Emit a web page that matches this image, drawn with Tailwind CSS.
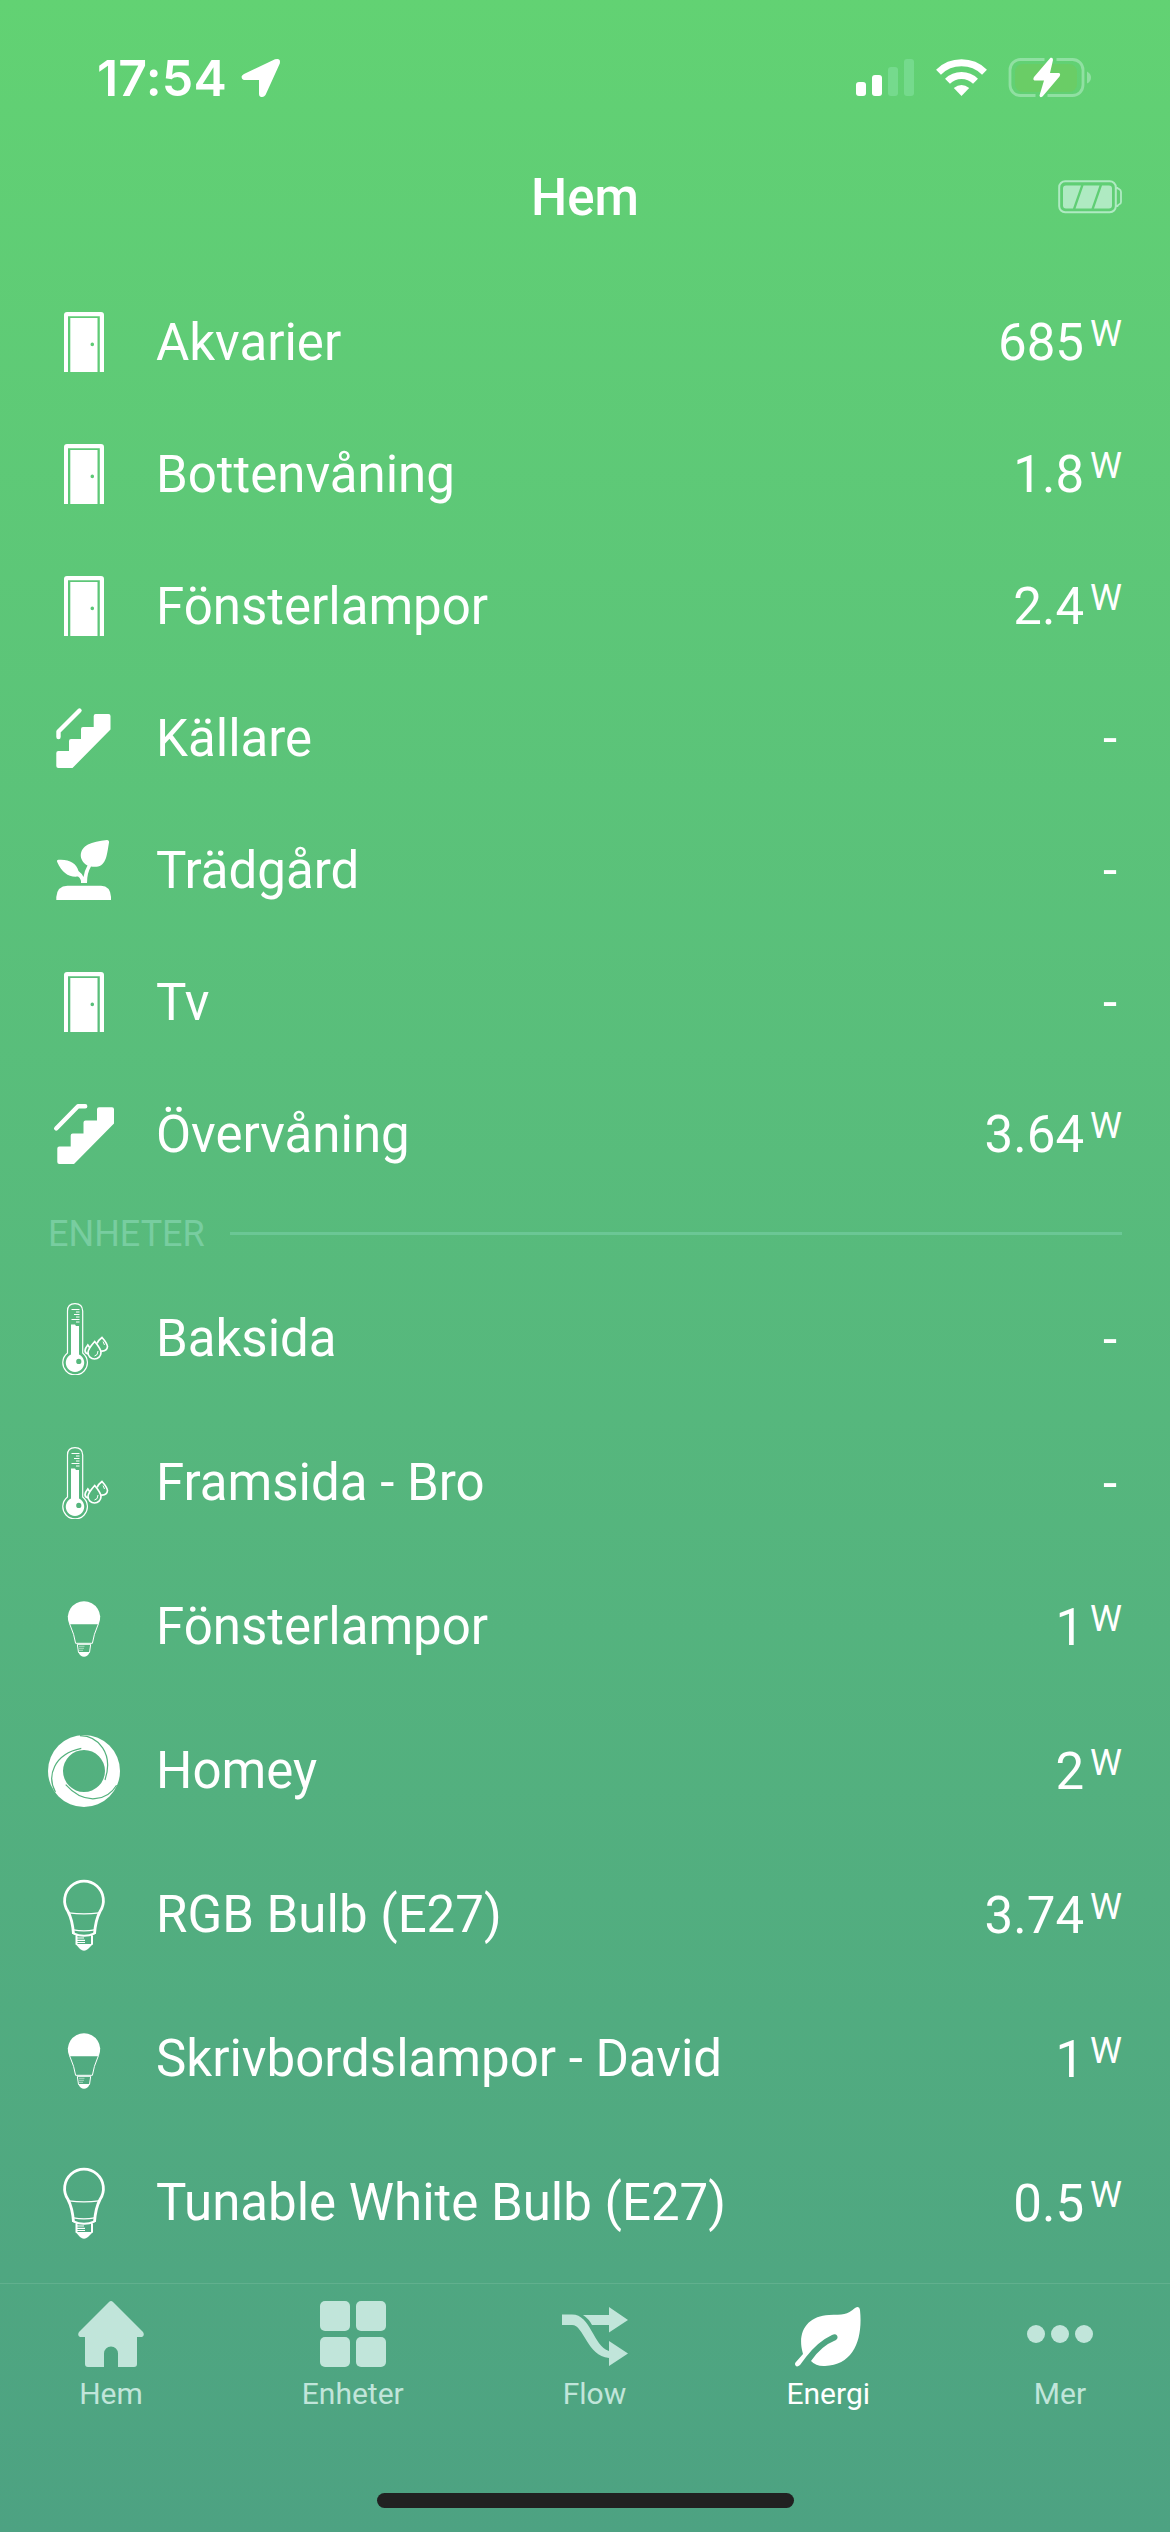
<!DOCTYPE html>
<html lang="sv">
<head>
<meta charset="utf-8">
<title>Hem – Energi</title>
<script src="https://cdn.jsdelivr.net/npm/@tailwindcss/browser@4"></script>
</head>
<body>
<svg class="hidden">
  <symbol id="door" viewBox="0 0 72 72">
    <path d="M16 66V9q0-3 3-3H53q3 0 3 3V66H51.8V10.2H20V66Z"/>
    <path fill-rule="evenodd" d="M22.3 12H49.5V66H22.3ZM44.3 36.6a1.8 1.8 0 1 0 0 3.6a1.8 1.8 0 0 0 0-3.6Z"/>
  </symbol>
  <symbol id="down" viewBox="0 0 72 72">
    <path fill="none" stroke="currentColor" stroke-width="4.4" stroke-linecap="round" stroke-linejoin="round" d="M10.5 35V29.5L31.5 8.5"/>
    <path d="M8.3 51q0-2 2-2H21V39q0-2 2-2H33V27q0-2 2-2H45.700V14q0-2 2-2H60.500q2 0 2 2V27.500L24.500 66H10.300q-2 0-2-2Z"/>
  </symbol>
  <symbol id="up" viewBox="0 0 72 72">
    <path fill="none" stroke="currentColor" stroke-width="4.400" stroke-linecap="round" stroke-linejoin="round" d="M8.200 30.500L30 8.200H37.200"/>
    <path d="M9.300 50.500q0-2 2-2H22.700V37.500q0-2 2-2H35.500V24.500q0-2 2-2H49V11.300q0-2 2-2H64q2 0 2 2V25.500L26 66H11.300q-2 0-2-2Z"/>
  </symbol>
  <symbol id="plant" viewBox="0 0 72 72">
    <path d="M8.300 66V63Q9 52 19.500 51.700H53Q62.500 52 63 63V66Z"/>
    <path d="M33 49Q33.500 45 30 42.500C21 43.500 14 39 9.200 28Q8.300 26 10.500 25.800C21 25 28.500 29 30.500 37Q34 39.500 35.500 43Q36.500 36.500 39.500 31.500C30 26 31 15 40 10.500Q47 7 59 6Q61.300 6 61 8.500C59 20 58.500 32 48.500 32.700Q45.500 33 43 32.500Q39 39 39 49Z"/>
  </symbol>
  <symbol id="thermo" viewBox="0 0 72 72">
    <g fill="none" stroke="currentColor" stroke-width="1.200">
      <path d="M19.500 50V8Q19.500.6 27 .6T34.700 8V50A12.300 12.300 0 1 1 19.500 50Z"/>
      <path stroke-width="1" d="M23.500 6.500H31.500M28 9H31.500M26 11.500H31.500M28 14H31.500M23.500 16.500H31.500M28 19H31.500"/>
    </g>
    <path fill-rule="evenodd" d="M23 21.500H27L28 23H31V51.500A9.200 9.200 0 1 1 23 51.500ZM30.800 55.800a2.600 2.600 0 1 0 0 5.200a2.600 2.600 0 0 0 0-5.200Z"/>
    <g fill="none" stroke="currentColor" stroke-width="1.700">
      <path d="M46.700 38.500Q53 46 53 49.500A6.500 6.500 0 0 1 40 49.500Q40 46 46.700 38.500Z"/>
      <path d="M40.500 51Q37 50.500 37 47.500Q37 45.500 39.800 42L42 45M49 40.500Q50 37.500 54 34.500Q59 40 59.500 43.500Q59 48.500 53 48"/>
      <path stroke-width="1" d="M46.500 53Q50 52.500 50 48M55 38.500L56.500 42"/>
    </g>
  </symbol>
  <symbol id="led" viewBox="0 0 72 72">
    <path d="M21.300 33.200A16.200 16.200 0 1 1 50.700 33.200Z"/>
    <g fill="none" stroke="currentColor" stroke-width="1">
      <path d="M21.700 33Q26.500 44 27.600 52.300H44.400Q45.500 44 50.300 33"/>
      <path d="M29.300 53.300L30.500 61.500H41.500L42.700 53.300Z"/>
      <path opacity=".5" d="M31 55.300H36.500M31 57.300H36M31 59.300H35"/>
    </g>
    <path d="M30.500 61.500H41.500Q39.500 65.800 36 65.800T30.500 61.500Z"/>
  </symbol>
  <symbol id="bulb" viewBox="0 0 72 72">
    <g fill="none" stroke="currentColor" stroke-width="2.800">
      <path d="M25.500 55Q24.500 41 20 32.500A19.400 19.400 0 1 1 52 32.500Q47.500 41 46.500 55"/>
      <path stroke-width="1.300" d="M21 33.800Q36 36 51 33.800M25.500 50.800Q36 53 46.500 50.800"/>
      <path stroke-width="2" d="M25.500 54.500Q36 59 46.500 54.500M28.500 56.500V65.500M44 56.500V65.500"/>
      <path stroke-width="1.200" d="M29 59H36M29 61.300H37M29 63.500H37"/>
    </g>
    <path d="M27.500 65H45L40 70Q36 73.500 32 70Z"/>
  </symbol>
  <symbol id="homey" viewBox="0 0 72 72">
    <path fill-rule="evenodd" d="M36 0a36 36 0 1 0 0 72a36 36 0 0 0 0-72ZM36 15a21 21 0 1 1 0 42a21 21 0 0 1 0-42Z"/>
    <g fill="none" class="stroke-[#54b17d]" stroke-width="1.200">
      <path id="swirl" d="M32 .7C50 1 66 18 57 45"/>
      <use href="#swirl" transform="rotate(120 36 36)"/>
      <use href="#swirl" transform="rotate(240 36 36)"/>
    </g>
  </symbol>
</svg>

<div class="w-[1170px] h-[2532px] flex flex-col overflow-hidden bg-linear-to-b from-[#62d273] to-[#4da282] text-white font-['Roboto',sans-serif]">
  <header class="h-[276px] shrink-0 flex flex-col">
    <div class="h-[150px] pl-[97px] pr-[78px] pt-[6px] flex items-center justify-between">
      <div class="flex items-center gap-3.5">
        <span class="font-['Inter',sans-serif] font-semibold text-[50px] leading-none tracking-[0.2px]">17:54</span>
        <svg class="w-[40px] h-[40px]" viewBox="0 0 40 40" fill="currentColor"><path d="M3 16L34 1.300Q40-.5 38.800 5.500L24.500 37Q22.500 40 19 38.500Q18 37.500 18 36V22H3.500Q.5 21.500.6 18.500Q1 17 3 16Z"/></svg>
      </div>
      <svg class="w-[236px] h-[42px]" viewBox="0 0 236 42" fill="currentColor">
        <rect x="0" y="25" width="10" height="14" rx="3"/>
        <rect x="16" y="18" width="10" height="21" rx="3"/>
        <rect x="32" y="10" width="10" height="29" rx="3" fill="#75da8d"/>
        <rect x="48" y="2" width="10" height="37" rx="3" fill="#75da8d"/>
        <g fill="none" stroke="currentColor" stroke-width="7">
          <path d="M82.500 15.200A33 33 0 0 1 128.500 15.200"/>
          <path d="M91.500 24.300A20 20 0 0 1 119.500 24.300"/>
        </g>
        <path d="M97.800 31Q105.500 25 113.200 31L105.500 39Z"/>
        <rect x="159" y="7" width="62" height="28" rx="8" fill="#6acd66"/>
        <path d="M189 2.500H165A10.500 10.500 0 0 0 154.500 13V28A10.500 10.500 0 0 0 165 38.500H180M201 2.500H217A10.500 10.500 0 0 1 227.500 13V28A10.500 10.500 0 0 1 217 38.500H192" transform="translate(-.5 0)" fill="none" stroke="#90e0a2" stroke-width="2.800"/>
        <path d="M231 14.500Q235 16.500 235 20.500T231 26.500Z" fill="#90e0a2"/>
        <path d="M194.500.8Q197 0 197 3L194 16H203Q205 17 203.500 19.500L186.500 39.500Q184 41.500 183.500 38.500L188 23.500H178.500Q176.500 22.500 178 20Z"/>
      </svg>
    </div>
    <div class="h-[94px] px-[48px] grid grid-cols-3 items-center">
      <h1 class="col-start-2 text-center text-[51px] leading-none font-medium">Hem</h1>
      <svg class="justify-self-end w-[64px] h-[34px] text-[#afeac2]" viewBox="0 0 64 34" fill="currentColor">
        <rect x="1.200" y="1.200" width="56.600" height="31" rx="6" fill="none" stroke="currentColor" stroke-width="2"/>
        <path d="M58 8H59.500Q60 9 61 9Q63 10 63 12V22Q63 24 61 24.500Q60 25 59.500 26H58" fill="none" stroke="currentColor" stroke-width="1.800"/>
        <path d="M8 5.500H23L15 28.500H8Q5 28.500 5 25.500V8.500Q5 5.500 8 5.500ZM25.500 5.500H41.500L33.500 28.500H17.500ZM44 5.500H51Q54 5.500 54 8.500V25.500Q54 28.500 51 28.500H36Z"/>
      </svg>
    </div>
  </header>

  <main class="shrink-0 h-[2007px] px-[48px]">
    <ul id="zones"></ul>
    <div class="h-[67px] flex items-center gap-[25px]">
      <h2 class="text-[36px] leading-none text-[#78cda0]">ENHETER</h2>
      <div class="grow h-[3px] bg-[#6bc795]"></div>
    </div>
    <ul id="devices"></ul>
  </main>

  <nav class="h-[249px] shrink-0 border-t border-white/10 flex flex-col justify-between pb-[24px]">
    <div class="flex justify-between pl-[78px] pr-[77px] pt-[17px] text-[30px] leading-none text-[#c1e5da]">
      <div class="w-[66px] flex flex-col items-center gap-3">
        <svg class="w-[66px] h-[66px]" viewBox="0 0 66 66" fill="currentColor"><path d="M31 1Q33-.8 35 1L65 31Q67 34.500 64 36H59V63Q59 66 56 66H40V52.500A7 7 0 0 0 26 52.500V66H10Q7 66 7 63V36H2Q-1 34.500 1 31Z"/></svg>
        <span>Hem</span>
      </div>
      <div class="w-[102px] flex flex-col items-center gap-3">
        <svg class="w-[66px] h-[66px]" viewBox="0 0 66 66" fill="currentColor"><rect width="30" height="30" rx="5"/><rect x="36" width="30" height="30" rx="5"/><rect y="36" width="30" height="30" rx="5"/><rect x="36" y="36" width="30" height="30" rx="5"/></svg>
        <span>Enheter</span>
      </div>
      <div class="w-[68px] flex flex-col items-start gap-3">
        <svg class="w-[66px] h-[66px]" viewBox="0 0 66 66" fill="currentColor"><path d="M0 13.500H10C29 13.500 31 45 47 50V40L66 52.500L47 65V57C25 55 22 24 10 24H0ZM21 14H47V6L66 19L47 31.500V24H30Q27 18 21 14Z"/></svg>
        <span class="w-[66px] text-center">Flow</span>
      </div>
      <div class="w-[82px] flex flex-col items-center gap-3 text-white">
        <svg class="w-[66px] h-[66px]" viewBox="0 0 66 66" fill="currentColor"><path d="M7.500 51C2 30 13 15 34 14C48 13.500 52 14 60 7Q64.500 4.500 65 9C68 38 59 64 30 65Q21 65.500 16 60Q26 45 41 39Q43.500 37 42 34.500Q40.500 32.500 37 34Q23 40.500 11 56L5 64Q2 66.500.5 64.500Q-.5 63 .5 61.500L8 53Z"/></svg>
        <span>Energi</span>
      </div>
      <div class="w-[66px] flex flex-col items-center gap-3">
        <svg class="w-[66px] h-[66px]" viewBox="0 0 66 66" fill="currentColor"><circle cx="9" cy="33" r="9"/><circle cx="33" cy="33" r="9"/><circle cx="57" cy="33" r="9"/></svg>
        <span>Mer</span>
      </div>
    </div>
    <div class="self-center w-[417px] h-[15px] rounded-full bg-[#212121]"></div>
  </nav>
</div>

<script>
  const row = (height, namePadding) => ([icon, name, value]) => `
    <li class="${height} flex items-center">
      <svg class="w-[72px] h-[72px] shrink-0 mr-[36px]" fill="currentColor"><use href="#${icon}"/></svg>
      <span class="grow text-[51px] leading-[60px] ${namePadding}">${name}</span>
      ${value
        ? `<span class="text-[51px] leading-[60px] pt-[2px]">${value}</span><span class="text-[36px] leading-[42px] pl-[6px] -mt-[17px]">W</span>`
        : `<span class="text-[51px] leading-[60px] pt-[2px] pr-[5px]">-</span>`}
    </li>`;

  document.getElementById('zones').innerHTML = [
    ['door', 'Akvarier', '685'],
    ['door', 'Bottenvåning', '1.8'],
    ['door', 'Fönsterlampor', '2.4'],
    ['down', 'Källare', ''],
    ['plant', 'Trädgård', ''],
    ['door', 'Tv', ''],
    ['up', 'Övervåning', '3.64'],
  ].map(row('h-[132px]', 'pt-[2px]')).join('');

  document.getElementById('devices').innerHTML = [
    ['thermo', 'Baksida', ''],
    ['thermo', 'Framsida - Bro', ''],
    ['led', 'Fönsterlampor', '1'],
    ['homey', 'Homey', '2'],
    ['bulb', 'RGB Bulb (E27)', '3.74'],
    ['led', 'Skrivbordslampor - David', '1'],
    ['bulb', 'Tunable White Bulb (E27)', '0.5'],
  ].map(row('h-[144px]', 'pt-0')).join('');
</script>
</body>
</html>
